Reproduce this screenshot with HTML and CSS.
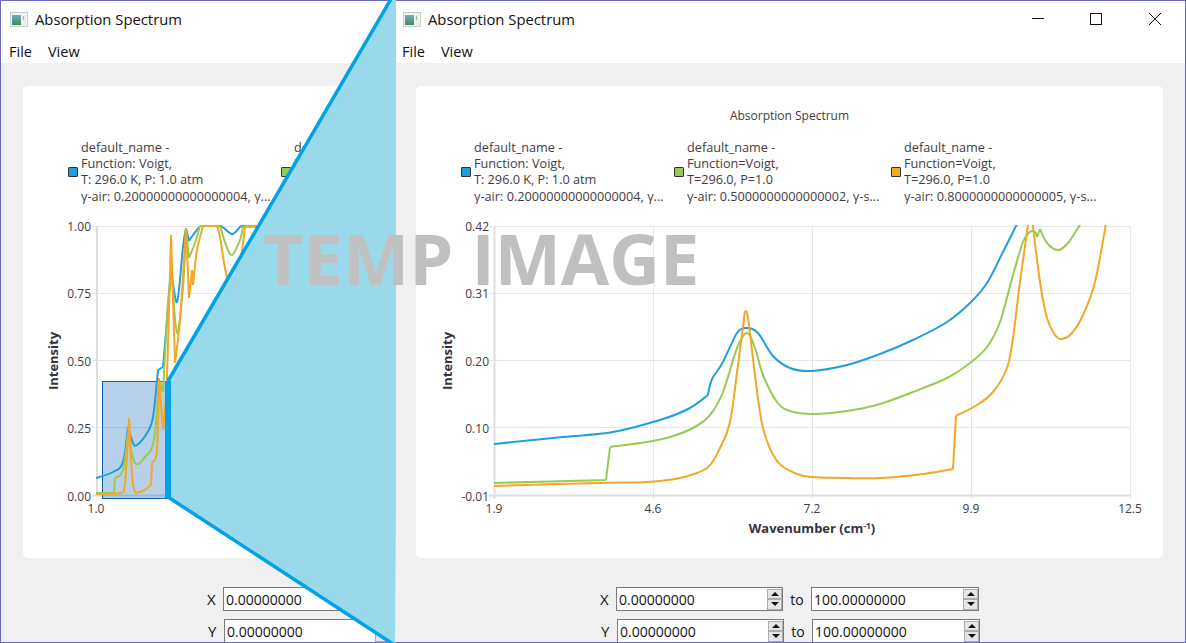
FILE: index.html
```html
<!DOCTYPE html>
<html lang="en">
<head>
<meta charset="utf-8">
<title>Absorption Spectrum</title>
<link rel="stylesheet" href="styles.css">
<script src="chart.js" defer></script>
</head>
<body>
<main class="desktop">
  <section class="pane pane-left">
    <div class="window">
      <header class="titlebar">
        <svg class="app-icon" viewBox="0 0 18 15"><defs><linearGradient id="ig1" x1="0" y1="0" x2="0" y2="1"><stop offset="0" stop-color="#6fb0c0"/><stop offset="1" stop-color="#3f8a5f"/></linearGradient></defs><rect x="0.5" y="0.5" width="17" height="14" fill="#f2f3f3" stroke="#c9cccc"/><rect x="2" y="3" width="9" height="10" fill="url(#ig1)"/><rect x="12" y="3" width="4" height="10" fill="#e9efe6"/><rect x="13" y="4" width="1" height="4" fill="#9fb8a8"/></svg>
        <span class="window-title">Absorption Spectrum</span>
      </header>
      <nav class="menubar"><span>File</span><span>View</span></nav>
      <div class="content">
        <article class="card">
          <h2 class="chart-title">Absorption Spectrum</h2>
          <ul class="legend">
            <li class="legend-item"><i class="swatch swatch-blue"></i><span>default_name -<br>Function: Voigt,<br>T: 296.0 K, P: 1.0 atm<br>γ-air: 0.20000000000000004, γ...</span></li>
            <li class="legend-item"><i class="swatch swatch-green"></i><span>default_name -<br>Function=Voigt,<br>T=296.0, P=1.0<br>γ-air: 0.5000000000000002, γ-s...</span></li>
            <li class="legend-item"><i class="swatch swatch-orange"></i><span>default_name -<br>Function=Voigt,<br>T=296.0, P=1.0<br>γ-air: 0.8000000000000005, γ-s...</span></li>
          </ul>
          <svg class="chart" viewBox="23 210 747 348">
            <defs><clipPath id="plot1"><rect x="96" y="225" width="641" height="272"/></clipPath></defs>
            <g class="grid">
              <path d="M92 226.500H737M92 293.500H737M92 360.500H737M92 427.500H737"/>
              <path d="M255.500 226V499"/>
            </g>
            <path class="axis" d="M97 226V496M92 495.500H737"/>
            <g class="tick-y">
              <text x="91" y="231">1.00</text><text x="91" y="298">0.75</text><text x="91" y="366">0.50</text><text x="91" y="433">0.25</text><text x="91" y="501">0.00</text>
            </g>
            <text class="tick-x" x="96" y="513">1.0</text>
            <text class="axis-title" transform="translate(58 361) rotate(-90)">Intensity</text>
            <rect class="zoom-rect" x="102.500" y="381.500" width="64" height="117"/>
            <g clip-path="url(#plot1)">
              <path class="line-blue" data-line="96,478 113,472 123,462 128,427|128,427 133,443 137,445 147,433 153,417 158,370|158,370 163,367|163,367 167,320 171,267|171,267 177,302 183,247 186,228|186,228 189,241|189,241 193,235 200,226|200,226 220,226 232,234 240,227 244,226|244,226 300,226"/>
              <path class="line-green" data-line="96,493 114,493|114,493 115,478|115,478 123,470 128,433|128,433 135,463 145,457 154,440 159,380|159,380 163,392|163,392 168,303 172,277|172,277 177,333 183,287 186,230|186,230 189,258|189,258 195,243 200,226|200,226 220,226|220,226 226,245 232,255 240,240 243,227|243,227 300,226"/>
              <path class="line-orange" data-line="96,494 120,493 125,483 129,418|129,418 133,484 140,492 151,485|151,485 152,463|152,463 157,450 159,378|159,378 163,430|163,430 167,377 171,235|171,235 175,363|175,363 180,320 186,228|186,228 189,298|189,298 192,270|192,270 193,285|193,285 197,250 203,226|203,226 217,226|217,226 220,237 227,277 235,280 242,250 245,226|245,226 300,226"/>
            </g>
          </svg>
        </article>
        <form class="controls">
          <div class="row"><label class="axis-label">X</label><div class="spin"><span>0.00000000</span><div class="spin-buttons"><b class="up"></b><b class="down"></b></div></div><span class="to">to</span><div class="spin spin-wide"><span>100.00000000</span><div class="spin-buttons"><b class="up"></b><b class="down"></b></div></div></div>
          <div class="row row-y"><label class="axis-label">Y</label><div class="spin"><span>0.00000000</span><div class="spin-buttons"><b class="up"></b><b class="down"></b></div></div><span class="to">to</span><div class="spin spin-wide"><span>100.00000000</span><div class="spin-buttons"><b class="up"></b><b class="down"></b></div></div></div>
        </form>
      </div>
    </div>
  </section>

  <section class="pane pane-right">
    <div class="window">
      <header class="titlebar">
        <svg class="app-icon" viewBox="0 0 18 15"><defs><linearGradient id="ig2" x1="0" y1="0" x2="0" y2="1"><stop offset="0" stop-color="#6fb0c0"/><stop offset="1" stop-color="#3f8a5f"/></linearGradient></defs><rect x="0.5" y="0.5" width="17" height="14" fill="#f2f3f3" stroke="#c9cccc"/><rect x="2" y="3" width="9" height="10" fill="url(#ig2)"/><rect x="12" y="3" width="4" height="10" fill="#e9efe6"/><rect x="13" y="4" width="1" height="4" fill="#9fb8a8"/></svg>
        <span class="window-title">Absorption Spectrum</span>
        <div class="window-controls">
          <button type="button" class="win-btn"><svg viewBox="0 0 12 12"><path d="M0 5.500H12"/></svg></button>
          <button type="button" class="win-btn"><svg viewBox="0 0 12 12"><rect x="0.500" y="0.500" width="11" height="11"/></svg></button>
          <button type="button" class="win-btn"><svg viewBox="0 0 12 12"><path d="M0 0L12 12M12 0L0 12"/></svg></button>
        </div>
      </header>
      <nav class="menubar"><span>File</span><span>View</span></nav>
      <div class="content">
        <article class="card">
          <h2 class="chart-title">Absorption Spectrum</h2>
          <ul class="legend">
            <li class="legend-item"><i class="swatch swatch-blue"></i><span>default_name -<br>Function: Voigt,<br>T: 296.0 K, P: 1.0 atm<br>γ-air: 0.20000000000000004, γ...</span></li>
            <li class="legend-item"><i class="swatch swatch-green"></i><span>default_name -<br>Function=Voigt,<br>T=296.0, P=1.0<br>γ-air: 0.5000000000000002, γ-s...</span></li>
            <li class="legend-item"><i class="swatch swatch-orange"></i><span>default_name -<br>Function=Voigt,<br>T=296.0, P=1.0<br>γ-air: 0.8000000000000005, γ-s...</span></li>
          </ul>
          <svg class="chart" viewBox="416 210 747 348">
            <defs><clipPath id="plot2"><rect x="494" y="225" width="636" height="272"/></clipPath></defs>
            <g class="grid">
              <path d="M489 226.500H1130M489 293.500H1130M489 360.500H1130M489 427.500H1130"/>
              <path d="M653.500 226V499M812.500 226V499M971.500 226V499M1130.500 226V499"/>
            </g>
            <path class="axis" d="M494.500 226V499M489 495.500H1130"/>
            <g class="tick-y">
              <text x="489" y="231">0.42</text><text x="489" y="298">0.31</text><text x="489" y="366">0.20</text><text x="489" y="433">0.10</text><text x="489" y="501">-0.01</text>
            </g>
            <g class="tick-x">
              <text x="494" y="513">1.9</text><text x="653" y="513">4.6</text><text x="812" y="513">7.2</text><text x="971" y="513">9.9</text><text x="1130" y="513">12.5</text>
            </g>
            <text class="axis-title" transform="translate(452 361) rotate(-90)">Intensity</text>
            <text class="axis-title" x="812" y="533" text-anchor="middle">Wavenumber (cm<tspan class="sup" dy="-4">-1</tspan><tspan dy="4">)</tspan></text>
            <g clip-path="url(#plot2)">
              <path class="line-blue" data-line="494,444 563,437 613,432 663,419 690,408 708,395|708,395 710,385 713,377|713,377 723,362 737,333 747,328 758,333 773,356 790,368 812,371 847,365 880,354 913,340 947,322 970,303 987,283 1003,252 1018,222"/>
              <path class="line-green" data-line="494,483 606,480|606,480 610,447|610,447 647,442 670,437 693,428 710,415 723,392 737,348 747,333 755,348 763,375 777,402 790,411 813,414 847,411 880,404 913,392 947,378 970,363 987,347 1000,322 1013,275 1023,242 1030,232 1035,232 1037,237|1037,237 1040,229|1040,229 1047,243 1058,250 1068,243 1081,223"/>
              <path class="line-orange" data-line="494,486 597,483 647,482 680,478 707,468 720,448 730,422 738,365 745,311|745,311 748,318 755,375 763,428 777,461 797,474 813,477 847,478 880,478 923,474 953,469|953,469 956,416|956,416 977,405 993,392 1007,368 1013,338 1020,282 1029,218|1032,218 1040,282 1047,318 1055,335 1062,339 1072,333 1083,315 1095,282 1107,218"/>
            </g>
          </svg>
        </article>
        <form class="controls">
          <div class="row"><label class="axis-label">X</label><div class="spin"><span>0.00000000</span><div class="spin-buttons"><b class="up"></b><b class="down"></b></div></div><span class="to">to</span><div class="spin spin-wide"><span>100.00000000</span><div class="spin-buttons"><b class="up"></b><b class="down"></b></div></div></div>
          <div class="row row-y"><label class="axis-label">Y</label><div class="spin"><span>0.00000000</span><div class="spin-buttons"><b class="up"></b><b class="down"></b></div></div><span class="to">to</span><div class="spin spin-wide"><span>100.00000000</span><div class="spin-buttons"><b class="up"></b><b class="down"></b></div></div></div>
        </form>
      </div>
    </div>
  </section>

  <svg class="zoom-overlay" viewBox="0 0 1186 643">
    <polygon class="zoom-fill" points="168,381 391,0 396,0 396,500 395,643 392,643 168,497"/>
    <path class="zoom-edge" d="M391 -1L168 381M168 497L393 644"/>
    <path class="zoom-spine" d="M168 381V498"/>
  </svg>
  <div class="stamp">TEMP IMAGE</div>
</main>
</body>
</html>
```
FILE: styles.css
```css
* { box-sizing: border-box; }
html, body { margin: 0; padding: 0; }
body { width: 1186px; height: 643px; overflow: hidden; background: #fff; font-family: "Open Sans", "Noto Sans", sans-serif; color: #1a1a1a; }

.desktop { position: relative; display: flex; width: 1186px; height: 643px; overflow: hidden; }
.pane { height: 643px; overflow: hidden; flex: none; }
.pane-left { width: 393px; }
.pane-right { width: 793px; }

.window { display: flex; flex-direction: column; width: 793px; height: 643px; border: 1px solid #6a6ac0; background: #fff; overflow: hidden; }

.titlebar { display: flex; align-items: center; height: 36px; flex: none; padding-left: 9px; background: #fff; }
.app-icon { width: 18px; height: 15px; flex: none; margin-right: 7px; }
.window-title { font-size: 14.800px; color: #111; }
.window-controls { display: flex; margin-left: auto; align-self: flex-start; padding-right: 1px; }
.win-btn { display: flex; align-items: center; justify-content: center; width: 58.500px; height: 36px; padding: 0; border: 0; background: transparent; }
.win-btn svg { display: block; width: 12px; height: 12px; fill: none; stroke: #111; stroke-width: 1; }

.menubar { display: flex; gap: 16px; align-items: center; height: 26px; flex: none; padding: 2px 0 0 8px; font-size: 14.500px; color: #111; }

.content { display: flex; flex-direction: column; flex: 1; min-height: 0; padding: 23px 22px 0; background: #f0f0f0; overflow: hidden; }

.card { flex: none; height: 472px; background: #fff; border-radius: 5px; padding-top: 22px; overflow: hidden; }
.chart-title { margin: 0 0 15px; font-size: 12px; font-weight: 400; line-height: 16px; text-align: center; color: #3d3d3d; }

.legend { display: grid; grid-template-columns: 213px 217px 1fr; margin: 0 0 7px; padding: 0 0 0 45px; list-style: none; font-size: 12.700px; line-height: 16.200px; color: #453a40; height: 64px; }
.legend-item { display: flex; align-items: center; gap: 3px; white-space: nowrap; }
.swatch { display: block; flex: none; width: 10px; height: 10px; margin-top: 2px; border: 1px solid #333; border-radius: 1px; }
.swatch-blue { background: #209fdf; }
.swatch-green { background: #99ca53; }
.swatch-orange { background: #f6a625; }

.chart { display: block; width: 747px; height: 348px; }
.grid path { fill: none; stroke: #e6e6e6; stroke-width: 1; }
.axis { fill: none; stroke: #dedede; stroke-width: 2; }
.chart text { font-family: "Open Sans", "Noto Sans", sans-serif; font-size: 12px; fill: #3f3a44; }
.tick-y text { text-anchor: end; }
.tick-x, .chart .tick-x text { text-anchor: middle; }
.chart .axis-title { font-size: 13px; font-weight: 700; text-anchor: middle; fill: #33333d; }
.chart .sup { font-size: 8.500px; }
[data-line] { fill: none; stroke-width: 2; stroke-linejoin: round; }
.line-blue { stroke: #209fdf; }
.line-green { stroke: #99ca53; }
.line-orange { stroke: #f6a625; }
.zoom-rect { fill: #0a64b4; fill-opacity: .3; stroke: #0b62ad; stroke-width: 1; }

.controls { display: flex; flex-direction: column; gap: 8px; margin: 29px 0 0; flex: none; }
.row { display: flex; justify-content: center; align-items: center; height: 24px; font-size: 14px; color: #111; }
.row-y { padding-left: 2px; }
.axis-label { width: 16px; padding-right: 8px; font-size: 15px; text-align: center; }
.to { width: 28px; text-align: center; }
.spin { display: flex; align-items: center; justify-content: space-between; width: 167px; height: 24px; flex: none; padding: 0 0 0 2px; border: 1px solid #7a7a7a; background: #fff; }
.spin-wide { width: 168px; }
.spin-buttons { display: flex; flex-direction: column; width: 15px; flex: none; }
.spin-buttons b { display: flex; align-items: center; justify-content: center; height: 10.500px; border: 1px solid #adadad; background: #e6e6e6; }
.spin-buttons b::before { content: ""; width: 0; height: 0; border-left: 4px solid transparent; border-right: 4px solid transparent; }
.spin-buttons .up::before { border-bottom: 4px solid #111; }
.spin-buttons .down::before { border-top: 4px solid #111; }

.zoom-overlay { position: absolute; left: 0; top: 0; width: 1186px; height: 643px; pointer-events: none; }
.zoom-fill { fill: #99d9ea; }
.zoom-edge { fill: none; stroke: #00a2e8; stroke-width: 3.500; }
.zoom-spine { fill: none; stroke: #00a2e8; stroke-width: 6; }

.stamp { position: absolute; left: 263px; top: 210px; font-size: 70.200px; font-weight: 700; line-height: 96px; color: #c0c0c0; white-space: nowrap; }
```
FILE: chart.js
```js
// Turns each line's sampled points into a smooth curve. "|" separates runs
// that meet at a sharp corner (a peak or a step in the spectrum).
document.querySelectorAll('[data-line]').forEach(function (line) {
  var d = '';
  line.dataset.line.split('|').forEach(function (run) {
    var p = run.trim().split(/\s+/).map(function (s) { return s.split(',').map(Number); });
    d += 'M' + p[0][0] + ' ' + p[0][1];
    for (var i = 0; i < p.length - 1; i++) {
      var a = p[Math.max(i - 1, 0)], b = p[i], c = p[i + 1], e = p[Math.min(i + 2, p.length - 1)];
      d += 'C' + (b[0] + (c[0] - a[0]) / 6) + ' ' + (b[1] + (c[1] - a[1]) / 6) + ' ' +
           (c[0] - (e[0] - b[0]) / 6) + ' ' + (c[1] - (e[1] - b[1]) / 6) + ' ' + c[0] + ' ' + c[1];
    }
  });
  line.setAttribute('d', d);
});
```
